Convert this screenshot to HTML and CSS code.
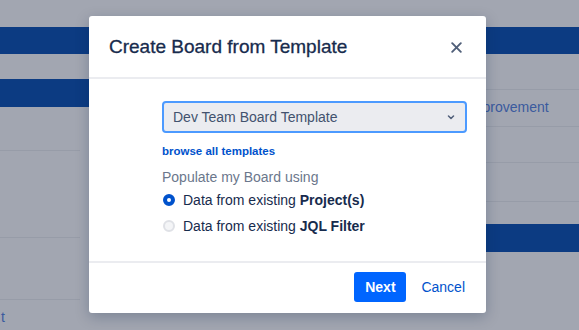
FILE: index.html
```html
<!DOCTYPE html>
<html lang="en">

<head>
    <meta charset="UTF-8">
    <meta name="viewport" content="width=device-width, initial-scale=1.0">
    <title>Create Board from Template</title>
    <link rel="stylesheet" href="styles.css">
</head>

<body>

    <div class="page">
        <div class="table-head"></div>
        <div class="columns">
            <div class="col-left">
                <div class="col-gap"></div>
                <div class="bar"></div>
                <div class="row row-a"></div>
                <div class="row row-b"></div>
                <div class="row row-c"></div>
                <a class="page-link" href="#">t</a>
            </div>
            <div class="col-right">
                <div class="row row-d"></div>
                <div class="row row-e"><a class="page-link" href="#">Improvement</a></div>
                <div class="row row-f"></div>
                <div class="row row-g"></div>
                <div class="bar bar-right"></div>
            </div>
        </div>
    </div>

    <div class="modal">
        <div class="modal-header">
            <h2>Create Board from Template</h2>
            <button class="close" aria-label="Close">
                <svg width="11" height="11" viewBox="0 0 11 11">
                    <path d="M1.2 1.2 L9.8 9.8 M9.8 1.2 L1.2 9.8" stroke="#505f79" stroke-width="1.9" stroke-linecap="round" />
                </svg>
            </button>
        </div>

        <div class="modal-body">
            <div class="select">
                <span>Dev Team Board Template</span>
                <svg width="8" height="5" viewBox="0 0 8 5">
                    <path d="M1.5 1 L4 3.5 L6.5 1" fill="none" stroke="#505f79" stroke-width="1.5" stroke-linecap="round" stroke-linejoin="round" />
                </svg>
            </div>
            <a class="browse" href="#">browse all templates</a>
            <p class="populate">Populate my Board using</p>
            <label class="radio">
                <span class="dot checked"></span>
                <span>Data from existing <b>Project(s)</b></span>
            </label>
            <label class="radio">
                <span class="dot"></span>
                <span>Data from existing <b>JQL Filter</b></span>
            </label>
        </div>

        <div class="modal-footer">
            <button class="btn-primary">Next</button>
            <button class="btn-link">Cancel</button>
        </div>
    </div>

</body>

</html>
```

FILE: styles.css
```css
body {
    font-family: "Liberation Sans", Arial, sans-serif;
    margin: 0;
    padding: 0;
    width: 579px;
    height: 330px;
    overflow: hidden;
    background-color: #a2a6b1;
    position: relative;
}

/* page behind the dialog */
.page {
    padding-top: 27px;
}

.table-head,
.bar {
    height: 27px;
    background-color: #0c3b82;
}

.columns {
    display: flex;
    justify-content: space-between;
}

.col-left {
    width: 100px;
}

.col-gap {
    height: 25px;
}

.col-left .bar {
    height: 28px;
}

.row {
    border-bottom: 1px solid #979ca8;
    box-sizing: border-box;
}

.col-left .row {
    width: 80px;
}

.row-a {
    height: 44px;
}

.row-b {
    height: 87px;
}

.row-c {
    height: 62px;
}

.page-link {
    color: #3a5a9e;
    font-size: 14px;
    text-decoration: none;
}

.col-left .page-link {
    display: block;
    margin-top: 9px;
    margin-left: 1px;
}

.col-right {
    width: 111px;
}

.row-d {
    height: 36px;
}

.row-e {
    height: 37px;
    padding-top: 8px;
}

.row-e .page-link {
    margin-left: -1px;
}

.row-f {
    height: 36px;
}

.row-g {
    height: 39px;
}

.bar-right {
    margin-top: 22px;
    height: 28px;
}

/* dialog */
.modal {
    position: absolute;
    left: 89px;
    top: 16px;
    width: 397px;
    height: 297px;
    background-color: #fff;
    border-radius: 3px;
    box-shadow: 0 4px 14px rgba(9, 30, 66, 0.25);
}

.modal-header {
    height: 61px;
    padding: 0 24px 0 20px;
    display: flex;
    align-items: center;
    justify-content: space-between;
    border-bottom: 2px solid #ebecf0;
}

.modal-header h2 {
    margin: 0;
    font-size: 19px;
    font-weight: normal;
    color: #172b4d;
    -webkit-text-stroke: 0.3px #172b4d;
}

.close {
    border: 0;
    background: none;
    padding: 0;
    display: flex;
    margin-top: 1px;
}

.modal-body {
    padding: 22px 19px 22px 73px;
}

.select {
    height: 32px;
    box-sizing: border-box;
    border: 2px solid #4c9aff;
    border-radius: 4px;
    background-color: #ebecf0;
    display: flex;
    align-items: center;
    justify-content: space-between;
    padding: 0 10px 0 9px;
    font-size: 14px;
    color: #42526e;
}

.browse {
    display: block;
    margin-top: 11px;
    font-size: 11.5px;
    line-height: 14px;
    font-weight: bold;
    color: #0052cc;
    text-decoration: none;
}

.populate {
    margin: 9px 0 0;
    font-size: 14px;
    line-height: 20px;
    color: #6b778c;
}

.radio {
    display: flex;
    align-items: center;
    gap: 8px;
    height: 26px;
    font-size: 14px;
    color: #172b4d;
    margin-left: 1px;
}

.dot {
    width: 12px;
    height: 12px;
    box-sizing: border-box;
    border-radius: 50%;
    border: 2px solid #dfe1e6;
    background-color: #f4f5f7;
}

.dot.checked {
    border: 4px solid #0052cc;
    background-color: #fff;
}

.modal-footer {
    border-top: 2px solid #ebecf0;
    padding: 9px 11px 0 0;
    display: flex;
    justify-content: flex-end;
    gap: 5px;
}

.btn-primary {
    height: 30px;
    width: 52px;
    border: 0;
    border-radius: 3px;
    background-color: #0065ff;
    color: #fff;
    font-family: inherit;
    font-size: 14px;
    font-weight: bold;
}

.btn-link {
    height: 30px;
    padding: 0 10px;
    border: 0;
    background: none;
    color: #0052cc;
    font-family: inherit;
    font-size: 14px;
}
```
